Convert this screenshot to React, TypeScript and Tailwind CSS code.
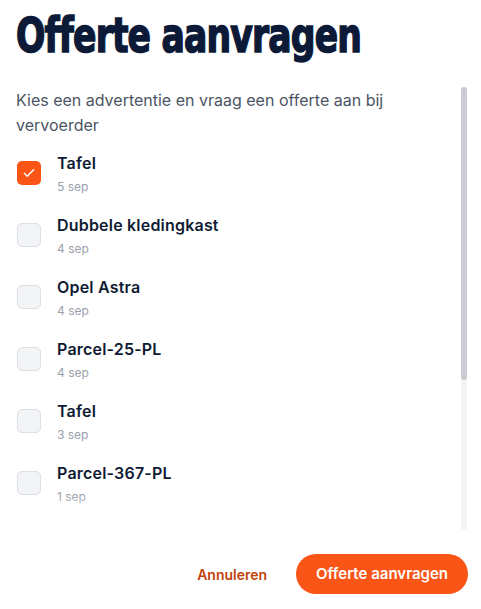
const items = [
  { name: "Tafel", date: "5 sep", checked: true },
  { name: "Dubbele kledingkast", date: "4 sep", checked: false },
  { name: "Opel Astra", date: "4 sep", checked: false },
  { name: "Parcel-25-PL", date: "4 sep", checked: false },
  { name: "Tafel", date: "3 sep", checked: false },
  { name: "Parcel-367-PL", date: "1 sep", checked: false },
  { name: "Stoel", date: "31 aug", checked: false },
];

function CheckBox({ checked }: { checked: boolean }) {
  if (checked) {
    return (
      <div className="w-6 h-6 rounded-[5px] bg-[#fa5517] flex items-center justify-center shrink-0">
        <svg width="14" height="14" viewBox="0 0 24 24" fill="none" stroke="white" strokeWidth="2.6" strokeLinecap="round" strokeLinejoin="round">
          <path d="M4 12.5l5 5L20 6.5" />
        </svg>
      </div>
    );
  }
  return <div className="w-6 h-6 rounded-[5px] bg-[#f3f4f6] border border-[#dcdfe4] shrink-0" />;
}

export default function App() {
  return (
    <div className="w-[481px] h-[609px] bg-white flex flex-col font-['Inter',sans-serif] overflow-hidden">
      <h1 className="px-4 pt-[9px] h-[87px] text-[48px] leading-[52px] font-bold text-[#0c1a38] font-['DejaVu_Sans_Condensed',sans-serif] tracking-[-1px]">
        <span className="inline-block origin-left scale-x-[0.8] [-webkit-text-stroke:1.5px_#0c1a38]">Offerte aanvragen</span>
      </h1>

      <div className="flex mr-[14px] h-[443px]">
        <div className="relative flex-1 overflow-hidden pl-4 pr-3">
          <p className="pt-[1px] text-[16px] leading-[25px] text-[#4b5563]">
            Kies een advertentie en vraag een offerte aan bij vervoerder
          </p>
          <ul className="mt-[11px] flex flex-col gap-[14px] pb-4">
            {items.map((it, i) => (
              <li key={i} className="flex gap-4 items-start h-[48px]">
                <div className="pt-[12px] pl-[1px]">
                  <CheckBox checked={it.checked} />
                </div>
                <div className="flex flex-col pt-[2px]">
                  <span className="text-[16px] leading-[24px] font-semibold tracking-[0.2px] text-[#0f1b33]">{it.name}</span>
                  <span className="text-[12px] leading-[20px] text-[#9aa1ad] mt-[2px]">{it.date}</span>
                </div>
              </li>
            ))}
          </ul>
          <div className="absolute left-0 right-0 bottom-0 h-[36px] bg-gradient-to-b from-white/0 to-white pointer-events-none" />
        </div>
        <div className="w-[6px] h-full rounded-full bg-[#f3f4f6] flex flex-col">
          <div className="h-[293px] rounded-full bg-[#c9ccd1]" />
        </div>
      </div>

      <div className="flex items-center justify-end gap-[29px] pr-[13px] pt-[24px]">
        <button className="text-[14px] font-semibold text-[#c2410c]">Annuleren</button>
        <button className="h-[40px] px-5 rounded-full bg-[#fa5517] text-white text-[15px] font-semibold">
          Offerte aanvragen
        </button>
      </div>
    </div>
  );
}
